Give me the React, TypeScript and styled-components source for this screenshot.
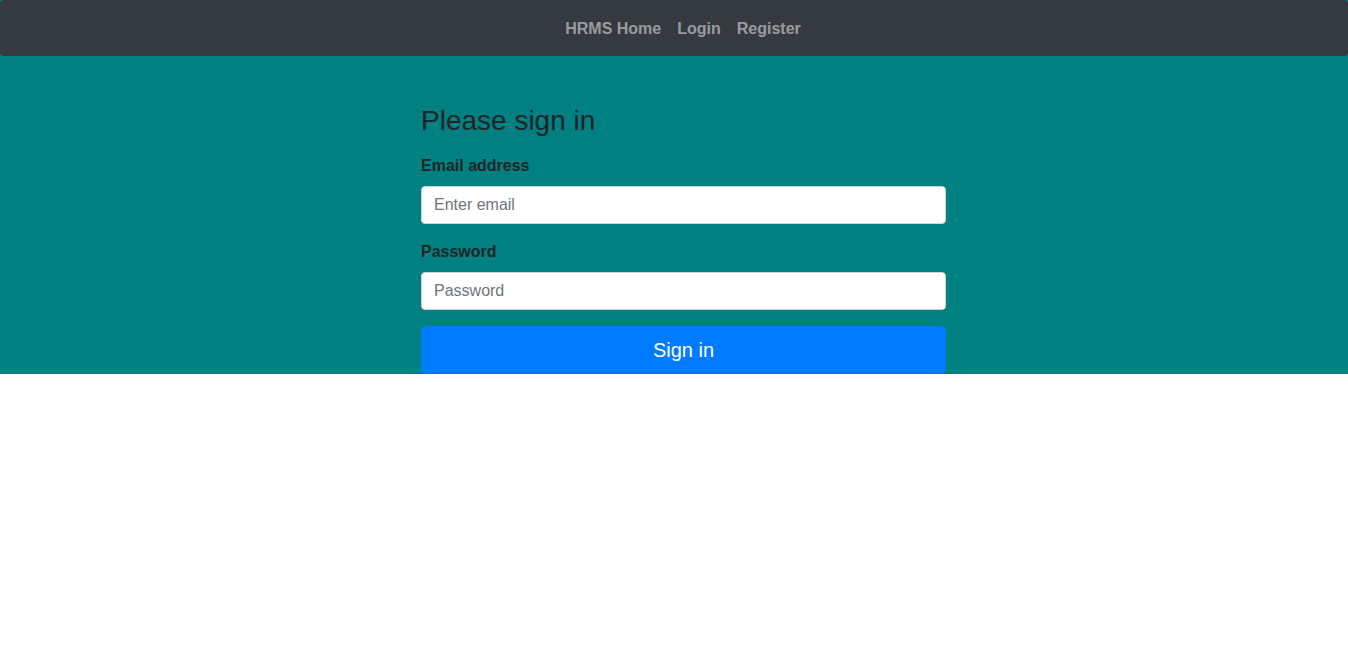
import React from "react";
import styled, { createGlobalStyle } from "styled-components";

const GlobalStyle = createGlobalStyle`
  html, body { margin: 0; padding: 0; background: #ffffff; }
  body {
    font-family: "Liberation Sans", Arial, sans-serif;
    font-size: 16px;
    line-height: 1.5;
    color: #212529;
  }
  * { box-sizing: border-box; }
`;

const Page = styled.div`
  background: #008080;
`;

const NavBar = styled.nav`
  height: 56px;
  background: #343a40;
  border-radius: 4px;
  display: flex;
  align-items: center;
  justify-content: center;
  padding: 2px 0 0 18px;
`;

const NavLink = styled.a`
  font-weight: 700;
  font-size: 16px;
  line-height: 24px;
  color: rgba(255, 255, 255, 0.5);
  padding: 8px;
  text-decoration: none;
  cursor: pointer;
`;

const Main = styled.main`
  display: flex;
  justify-content: center;
  padding: 48px 0 0 19px;
`;

const Form = styled.form`
  width: 525px;
  display: flex;
  flex-direction: column;
`;

const Heading = styled.h3`
  margin: 0 0 16px;
  font-size: 28px;
  font-weight: 500;
  line-height: 1.2;
  color: #212529;
`;

const Group = styled.div`
  display: flex;
  flex-direction: column;
  margin-bottom: 16px;
`;

const Label = styled.label`
  font-weight: 700;
  font-size: 16px;
  line-height: 24px;
  margin-bottom: 8px;
  color: #212529;
`;

const Input = styled.input`
  height: 38px;
  padding: 6px 12px;
  font-family: inherit;
  font-size: 16px;
  line-height: 24px;
  color: #495057;
  background: #ffffff;
  border: 1px solid #ced4da;
  border-radius: 4px;
  outline: none;
  &::placeholder { color: #6c757d; opacity: 1; }
`;

const Button = styled.button`
  height: 48px;
  padding: 8px 16px;
  font-family: inherit;
  font-size: 20px;
  line-height: 30px;
  color: #ffffff;
  background: #007bff;
  border: 1px solid #007bff;
  border-radius: 4.8px;
  cursor: pointer;
`;

export default function App() {
  return (
    <>
      <GlobalStyle />
      <Page>
        <NavBar>
          <NavLink>HRMS Home</NavLink>
          <NavLink>Login</NavLink>
          <NavLink>Register</NavLink>
        </NavBar>
        <Main>
          <Form onSubmit={(e) => e.preventDefault()}>
            <Heading>Please sign in</Heading>
            <Group>
              <Label htmlFor="email">Email address</Label>
              <Input id="email" type="email" placeholder="Enter email" />
            </Group>
            <Group>
              <Label htmlFor="password">Password</Label>
              <Input id="password" type="password" placeholder="Password" />
            </Group>
            <Button type="submit">Sign in</Button>
          </Form>
        </Main>
      </Page>
    </>
  );
}
